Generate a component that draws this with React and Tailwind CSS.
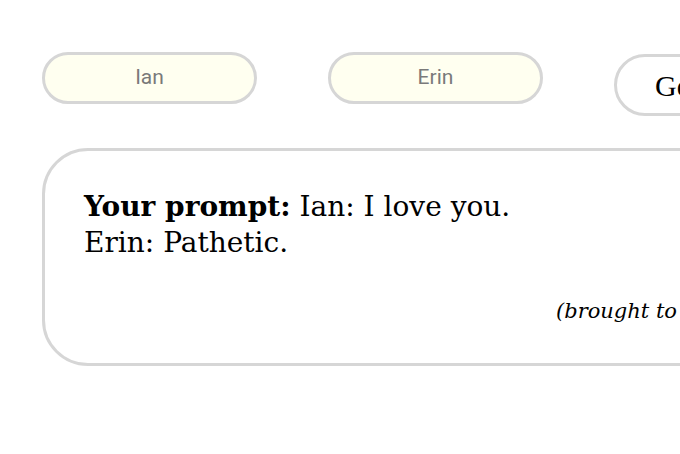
export default function App() {
  return (
    <div className="w-[680px] h-[454px] overflow-hidden bg-white">
      <div className="w-[1000px] pl-[42px] pt-[52px]">
        <div className="flex items-start gap-[71px]">
          <div className="w-[215px] h-[52px] rounded-full border-[3px] border-[#d6d6d6] bg-[#fffff0] flex items-center justify-center pb-[1px] text-[21px] text-[#7a7a7a] [font-family:Roboto,sans-serif]">
            Ian
          </div>
          <div className="w-[215px] h-[52px] rounded-full border-[3px] border-[#d6d6d6] bg-[#fffff0] flex items-center justify-center pb-[1px] text-[21px] text-[#7a7a7a] [font-family:Roboto,sans-serif]">
            Erin
          </div>
          <div className="mt-[2px] h-[62px] rounded-full border-[3px] border-[#d6d6d6] bg-white flex items-center px-[38px] text-[30px] text-black [font-family:'Liberation_Serif',serif]">
            Generate
          </div>
        </div>
        <div className="mt-[32px] w-[900px] h-[218px] rounded-[46px] border-[3px] border-[#d6d6d6] bg-white pt-[38px] pl-[39px] pr-[40px] [font-family:'DejaVu_Serif',serif] text-black">
          <p className="text-[28px] leading-[36px]">
            <span className="font-bold">Your prompt:</span> Ian: I love you.
            <br />
            Erin: Pathetic.
          </p>
          <p className="mt-[36px] pl-[472px] italic text-[21px] leading-[28px]">
            (brought to you by the AI)
          </p>
        </div>
      </div>
    </div>
  );
}
